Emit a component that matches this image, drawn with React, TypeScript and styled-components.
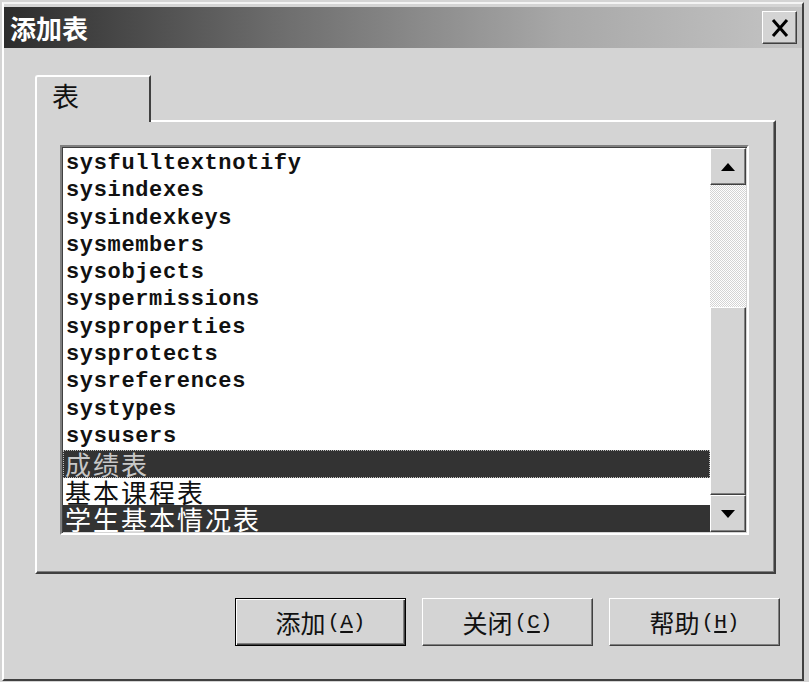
import React from "react";
import styled, { createGlobalStyle, css } from "styled-components";

const GlobalStyle = createGlobalStyle`
  html, body {
    margin: 0;
    padding: 0;
    background: #d4d4d4;
  }
  body {
    font-family: "Noto Sans CJK SC", "Liberation Sans", sans-serif;
  }
`;

const raised = css`
  border: 1px solid;
  border-color: #ffffff #404040 #404040 #ffffff;
  box-shadow: inset -1px -1px #808080;
  background: #d4d4d4;
  box-sizing: border-box;
`;

const Window = styled.div`
  width: 809px;
  height: 682px;
  box-sizing: border-box;
  padding: 2px 5px 1px 2px;
  background: #d4d4d4;
  display: flex;
`;

const Frame = styled.div`
  flex: 1;
  display: flex;
  flex-direction: column;
  border: 2px solid;
  border-color: #f4f4f4 #404040 #404040 #ffffff;
  padding-top: 3px;
`;

const TitleBar = styled.div`
  height: 41px;
  display: flex;
  align-items: center;
  justify-content: space-between;
  padding: 0 5px 0 6px;
  background: linear-gradient(90deg, #2c2c2c 0%, #6e6e6e 35%, #a8a8a8 70%, #c4c4c4 100%);
`;

const Title = styled.span`
  color: #ffffff;
  font-size: 26px;
  font-weight: bold;
  line-height: 1;
`;

const CloseButton = styled.div`
  ${raised};
  width: 35px;
  height: 33px;
  display: flex;
  align-items: center;
  justify-content: center;
`;

const Body = styled.div`
  flex: 1;
  display: flex;
  flex-direction: column;
  padding: 27px 26px 0 31px;
`;

const TabStrip = styled.div`
  display: flex;
`;

const Tab = styled.div`
  position: relative;
  z-index: 1;
  width: 116px;
  height: 47px;
  margin-bottom: -2px;
  box-sizing: border-box;
  border-left: 2px solid #ffffff;
  border-top: 2px solid #ffffff;
  border-right: 2px solid #404040;
  border-top-left-radius: 3px;
  background: #d4d4d4;
  padding: 2px 0 0 15px;
  font-size: 27px;
  line-height: 34px;
  color: #111;
`;

const Panel = styled.div`
  width: 741px;
  height: 454px;
  box-sizing: border-box;
  border: 2px solid;
  border-color: #ffffff #404040 #404040 #ffffff;
  box-shadow: inset -1px -1px #808080;
  padding: 23px 0 0 23px;
`;

const ListBox = styled.div`
  width: 689px;
  height: 390px;
  box-sizing: border-box;
  border: 2px solid;
  border-color: #808080 #ffffff #ffffff #808080;
  box-shadow: inset 1px 1px #404040, inset -1px -1px #d4d4d4;
  padding: 1px;
  background: #ffffff;
  display: flex;
`;

const Items = styled.div`
  flex: 1;
  padding-top: 2px;
`;

const Item = styled.div<{ $cjk?: boolean; $selected?: boolean; $focused?: boolean }>`
  height: 27.3px;
  line-height: 27.3px;
  padding-left: 3px;
  white-space: nowrap;
  box-sizing: border-box;
  color: #111;
  font-family: "Liberation Mono", "DejaVu Sans Mono", monospace;
  font-weight: bold;
  font-size: 22px;
  letter-spacing: 0.65px;
  ${(p) =>
    p.$cjk &&
    css`
      font-family: "Noto Sans CJK SC", "Liberation Sans", sans-serif;
      font-weight: normal;
      font-size: 26px;
      letter-spacing: 2px;
      padding-left: 2px;
    `}
  ${(p) =>
    p.$selected &&
    css`
      background: #333333;
      color: #ffffff;
    `}
  ${(p) =>
    p.$focused &&
    css`
      outline: 1px dotted #bdbdbd;
      outline-offset: -1px;
      color: #c8c8c8;
    `}
`;

const ScrollBar = styled.div`
  width: 36px;
  display: flex;
  flex-direction: column;
`;

const ScrollButton = styled.div`
  ${raised};
  height: 37px;
  display: flex;
  align-items: center;
  justify-content: center;
`;

const Track = styled.div`
  height: 122px;
  background: repeating-conic-gradient(#d4d4d4 0 25%, #ffffff 0 50%) 0 0 / 2px 2px;
`;

const Thumb = styled.div`
  ${raised};
  height: 188px;
`;

const ButtonRow = styled.div`
  display: flex;
  justify-content: flex-end;
  gap: 16px;
  margin: 24px -4px 0 0;
`;

const DialogButton = styled.div<{ $isDefault?: boolean }>`
  ${raised};
  width: 171px;
  height: 48px;
  display: flex;
  align-items: center;
  justify-content: center;
  font-size: 25px;
  color: #111;
  ${(p) =>
    p.$isDefault &&
    css`
      border-color: #000000;
      box-shadow: inset 1px 1px #ffffff, inset -1px -1px #404040, inset -2px -2px #808080;
    `}
`;

const Accel = styled.span`
  font-family: "Liberation Mono", monospace;
  font-size: 21px;
  margin-left: 2px;
  u {
    text-underline-offset: 3px;
  }
`;

const Arrow = ({ up }: { up?: boolean }) => (
  <svg width="14" height="8" viewBox="0 0 14 8">
    <polygon points={up ? "0,8 14,8 7,0" : "0,0 14,0 7,8"} fill="#000" />
  </svg>
);

const tables = [
  "sysfulltextnotify",
  "sysindexes",
  "sysindexkeys",
  "sysmembers",
  "sysobjects",
  "syspermissions",
  "sysproperties",
  "sysprotects",
  "sysreferences",
  "systypes",
  "sysusers",
];

const buttons = [
  { label: "添加", key: "A", isDefault: true },
  { label: "关闭", key: "C" },
  { label: "帮助", key: "H" },
];

const App = () => {
  return (
    <>
      <GlobalStyle />
      <Window>
        <Frame>
          <TitleBar>
            <Title>添加表</Title>
            <CloseButton>
              <svg width="18" height="18" viewBox="0 0 18 18">
                <path d="M2 1 L16 17 M16 1 L2 17" stroke="#000" strokeWidth="3" />
              </svg>
            </CloseButton>
          </TitleBar>
          <Body>
            <TabStrip>
              <Tab>表</Tab>
            </TabStrip>
            <Panel>
              <ListBox>
                <Items>
                  {tables.map((t) => (
                    <Item key={t}>{t}</Item>
                  ))}
                  <Item $cjk $selected $focused>
                    成绩表
                  </Item>
                  <Item $cjk>基本课程表</Item>
                  <Item $cjk $selected>
                    学生基本情况表
                  </Item>
                </Items>
                <ScrollBar>
                  <ScrollButton>
                    <Arrow up />
                  </ScrollButton>
                  <Track />
                  <Thumb />
                  <ScrollButton>
                    <Arrow />
                  </ScrollButton>
                </ScrollBar>
              </ListBox>
            </Panel>
            <ButtonRow>
              {buttons.map((b) => (
                <DialogButton key={b.key} $isDefault={b.isDefault}>
                  {b.label}
                  <Accel>
                    (<u>{b.key}</u>)
                  </Accel>
                </DialogButton>
              ))}
            </ButtonRow>
          </Body>
        </Frame>
      </Window>
    </>
  );
};

export default App;
